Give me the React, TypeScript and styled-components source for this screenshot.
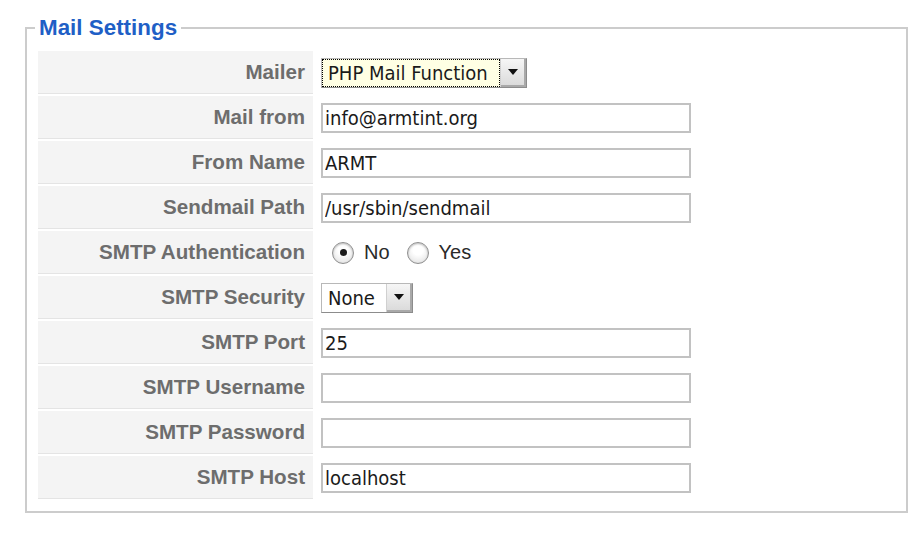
import React from 'react'
import styled, { createGlobalStyle } from 'styled-components'

const GlobalStyle = createGlobalStyle`
    html, body {
        margin: 0;
        padding: 0;
        background: #ffffff;
    }
    body {
        font-family: "Liberation Sans", Arial, sans-serif;
    }
`

const Page = styled.div`
    width: 918px;
    height: 539px;
    padding-top: 15px;
    box-sizing: border-box;
`

const Fieldset = styled.fieldset`
    box-sizing: border-box;
    width: 883px;
    margin: 0 0 0 25px;
    padding: 10px 11px 12px 11px;
    border: 2px solid #cccccc;
    min-inline-size: 0;
`

const Legend = styled.legend`
    margin-left: -3px;
    padding: 0 4px;
    font-family: "Liberation Sans", Arial, sans-serif;
    font-weight: bold;
    font-size: 22.4px;
    line-height: 26px;
    color: #1f5fc6;
`

const Form = styled.div`
    display: grid;
    grid-template-columns: 275px 1fr;
    row-gap: 2px;
`

const Label = styled.div`
    height: 42px;
    display: flex;
    align-items: center;
    justify-content: flex-end;
    padding-right: 8px;
    background: #f4f4f4;
    border-bottom: 1px solid #e4e4e4;
    font-weight: bold;
    font-size: 20.6px;
    color: #6d6d6d;
`

const Field = styled.div`
    display: flex;
    align-items: center;
    padding-left: 8px;
`

const TextInput = styled.input`
    box-sizing: border-box;
    width: 370px;
    height: 30px;
    margin: 0;
    padding: 0 2px;
    border: 2px solid #c2c2c2;
    outline: none;
    background: #ffffff;
    font-family: "DejaVu Sans Condensed", "DejaVu Sans", sans-serif;
    font-stretch: condensed;
    font-size: 20px;
    color: #1a1a1a;
`

const Select = styled.div<{ $width: number; $focused?: boolean }>`
    box-sizing: border-box;
    width: ${p => p.$width}px;
    height: 30px;
    display: flex;
    border: 1px solid #b8b8b8;
    border-right-color: #8c8c8c;
    border-bottom-color: #8c8c8c;
    background: ${p => (p.$focused ? '#ffffe4' : '#ffffff')};
`

const SelectText = styled.div<{ $focused?: boolean }>`
    flex: 1;
    display: flex;
    align-items: center;
    padding-left: 5px;
    border: 1px dotted ${p => (p.$focused ? '#000000' : 'transparent')};
    font-family: "DejaVu Sans Condensed", "DejaVu Sans", sans-serif;
    font-stretch: condensed;
    font-size: 20px;
    color: #1a1a1a;
    white-space: nowrap;
`

const SelectButton = styled.div`
    width: 25px;
    display: flex;
    align-items: center;
    justify-content: center;
    background: linear-gradient(#f6f6f6, #d9d9d9);
    border-left: 1px solid #d0d0d0;
    box-shadow: inset -2px -2px 0 #a9a9a9;

    &::after {
        content: '';
        border-left: 5px solid transparent;
        border-right: 5px solid transparent;
        border-top: 6px solid #111111;
        margin: 0 2px 2px 0;
    }
`

const RadioGroup = styled.div`
    display: flex;
    align-items: center;
    margin-left: 11px;
    font-size: 20px;
    color: #2a2a2a;
`

const RadioOption = styled.label`
    display: flex;
    align-items: center;
    gap: 10px;
    margin-right: 17px;
`

const RadioCircle = styled.span<{ $checked?: boolean }>`
    box-sizing: border-box;
    width: 22px;
    height: 22px;
    border-radius: 50%;
    border: 1px solid #8f8f8f;
    background: radial-gradient(circle at 50% 35%, #ffffff 30%, #dcdcdc 100%);
    box-shadow: inset 0 1px 2px rgba(0, 0, 0, 0.25);
    display: flex;
    align-items: center;
    justify-content: center;

    &::after {
        content: '';
        width: 7px;
        height: 7px;
        border-radius: 50%;
        background: ${p => (p.$checked ? '#1c1c1c' : 'transparent')};
    }
`

const textRows: [string, string][] = [
    ['Mail from', 'info@armtint.org'],
    ['From Name', 'ARMT'],
    ['Sendmail Path', '/usr/sbin/sendmail'],
]

const smtpRows: [string, string][] = [
    ['SMTP Port', '25'],
    ['SMTP Username', ''],
    ['SMTP Password', ''],
    ['SMTP Host', 'localhost'],
]

function App() {
    return (
        <Page>
            <GlobalStyle />
            <Fieldset>
                <Legend>Mail Settings</Legend>
                <Form>
                    <Label>Mailer</Label>
                    <Field>
                        <Select $width={206} $focused>
                            <SelectText $focused>PHP Mail Function</SelectText>
                            <SelectButton />
                        </Select>
                    </Field>

                    {textRows.map(([label, value]) => (
                        <React.Fragment key={label}>
                            <Label>{label}</Label>
                            <Field>
                                <TextInput defaultValue={value} />
                            </Field>
                        </React.Fragment>
                    ))}

                    <Label>SMTP Authentication</Label>
                    <Field>
                        <RadioGroup>
                            <RadioOption>
                                <RadioCircle $checked />
                                No
                            </RadioOption>
                            <RadioOption>
                                <RadioCircle />
                                Yes
                            </RadioOption>
                        </RadioGroup>
                    </Field>

                    <Label>SMTP Security</Label>
                    <Field>
                        <Select $width={92}>
                            <SelectText>None</SelectText>
                            <SelectButton />
                        </Select>
                    </Field>

                    {smtpRows.map(([label, value]) => (
                        <React.Fragment key={label}>
                            <Label>{label}</Label>
                            <Field>
                                <TextInput type={label === 'SMTP Password' ? 'password' : 'text'} defaultValue={value} />
                            </Field>
                        </React.Fragment>
                    ))}
                </Form>
            </Fieldset>
        </Page>
    )
}

export default App
